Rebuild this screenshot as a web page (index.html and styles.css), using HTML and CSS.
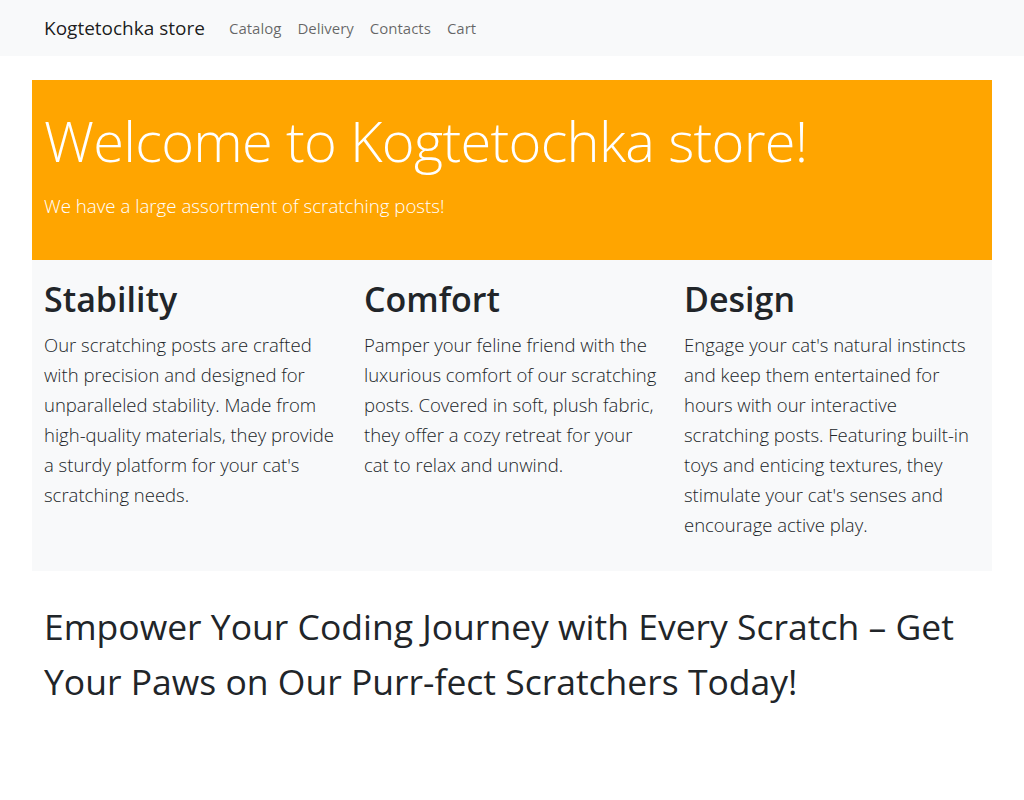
FILE: index.html
```html
<!DOCTYPE html>
<html lang="en">
<head>
<meta charset="utf-8">
<title>Kogtetochka store</title>
<link rel="stylesheet" href="styles.css">
</head>
<body>
<nav class="navbar">
  <div class="nav-inner">
    <a class="brand" href="#">Kogtetochka store</a>
    <ul class="nav-links">
      <li><a href="#">Catalog</a></li>
      <li><a href="#">Delivery</a></li>
      <li><a href="#">Contacts</a></li>
      <li><a href="#">Cart</a></li>
    </ul>
  </div>
</nav>
<main class="container">
  <section class="hero">
    <h1 class="hero-title">Welcome to Kogtetochka store!</h1>
    <p class="lead hero-lead">We have a large assortment of scratching posts!</p>
  </section>
  <section class="features">
    <div class="feature">
      <h2 class="feature-title">Stability</h2>
      <p class="lead">Our scratching posts are crafted with precision and designed for unparalleled stability. Made from high-quality materials, they provide a sturdy platform for your cat's scratching needs.</p>
    </div>
    <div class="feature">
      <h2 class="feature-title">Comfort</h2>
      <p class="lead">Pamper your feline friend with the luxurious comfort of our scratching posts. Covered in soft, plush fabric, they offer a cozy retreat for your cat to relax and unwind.</p>
    </div>
    <div class="feature">
      <h2 class="feature-title">Design</h2>
      <p class="lead">Engage your cat's natural instincts and keep them entertained for hours with our interactive scratching posts. Featuring built-in toys and enticing textures, they stimulate your cat's senses and encourage active play.</p>
    </div>
  </section>
  <h2 class="tagline">Empower Your Coding Journey with Every Scratch – Get Your Paws on Our Purr-fect Scratchers Today!</h2>
</main>
</body>
</html>
```
FILE: styles.css
```css
* { box-sizing: border-box; }
body {
  margin: 0;
  font-family: "Open Sans", "Noto Sans", sans-serif;
  color: #212529;
  background: #fff;
  font-size: 16px;
  line-height: 1.5;
}
a { text-decoration: none; }
.navbar {
  background: #f8f9fa;
  height: 56px;
}
.nav-inner {
  width: 960px;
  margin: 0 auto;
  padding: 0 12px;
  height: 100%;
  display: flex;
  align-items: center;
}
.brand {
  font-size: 19px;
  color: rgba(0,0,0,.9);
  margin-right: 16px;
}
.nav-links {
  display: flex;
  list-style: none;
  margin: 0;
  padding: 0;
}
.nav-links a {
  display: block;
  padding: 8px;
  font-size: 15px;
  color: rgba(0,0,0,.6);
}
.container {
  width: 960px;
  margin: 24px auto 0;
}
.hero {
  background: #ffa500;
  color: #fff;
  height: 180px;
  padding: 27px 12px 0;
}
.hero-title {
  margin: 0;
  font-weight: 300;
  font-size: 56px;
  line-height: 1.2;
  letter-spacing: -0.7px;
}
.lead {
  font-size: 18.5px;
  font-weight: 300;
  line-height: 30px;
  margin: 0;
}
.hero-lead {
  margin-top: 17px;
  font-size: 18.7px;
}
.features {
  background: #f8f9fa;
  display: grid;
  grid-template-columns: repeat(3, 1fr);
  padding: 19px 0 31px;
}
.feature { padding: 0 12px; }
.feature-title {
  margin: 0 0 10px;
  font-size: 34px;
  font-weight: 600;
  line-height: 1.2;
}
.tagline {
  margin: 28px 0 0;
  padding: 0 12px;
  font-size: 35.5px;
  font-weight: 400;
  line-height: 55px;
}
```
